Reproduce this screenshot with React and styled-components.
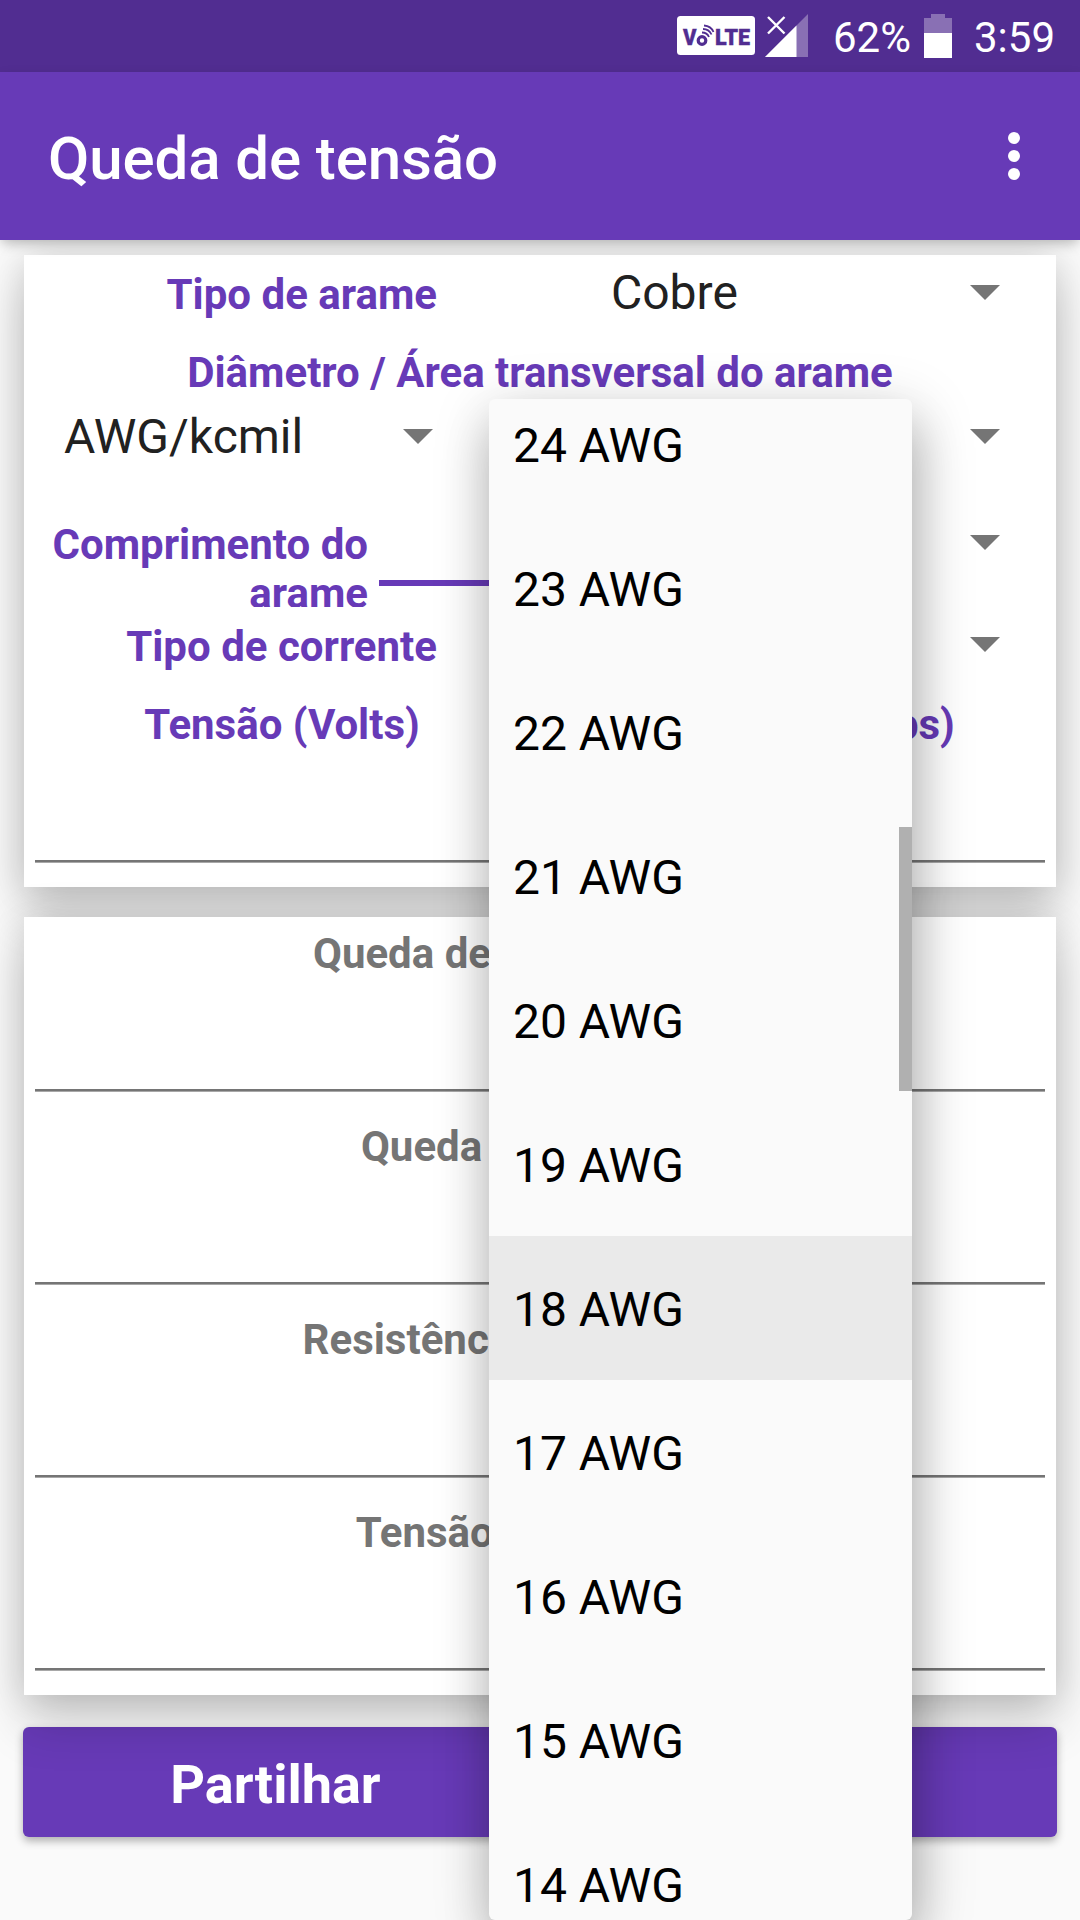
import React from "react";
import styled, { createGlobalStyle, css } from "styled-components";

const GlobalStyle = createGlobalStyle`
  * {
    box-sizing: border-box;
  }
  body {
    margin: 0;
    background: #fafafa;
    font-family: Roboto, "Liberation Sans", sans-serif;
  }
`;

const Screen = styled.div`
  position: relative;
  width: 1080px;
  height: 1920px;
  overflow: hidden;
  background: #fafafa;
`;

const StatusBar = styled.div`
  display: flex;
  align-items: flex-start;
  justify-content: flex-end;
  height: 72px;
  padding: 14px 25px 0 0;
  background: #512d91;
  color: #fff;
  font-size: 42px;
  line-height: 48px;
  svg {
    display: block;
    flex: none;
  }
`;
const Percent = styled.span`
  width: 79px;
  margin: 0 12px 0 25px;
  white-space: nowrap;
`;
const Clock = styled.span`
  margin-left: 22px;
  white-space: nowrap;
`;

const AppBar = styled.header`
  position: relative;
  z-index: 3;
  display: flex;
  align-items: center;
  justify-content: space-between;
  height: 168px;
  padding: 0 60px 0 48px;
  background: #673ab7;
  box-shadow: 0 5px 12px -2px rgba(0, 0, 0, 0.28);
`;
const Title = styled.h1`
  margin: 5px 0 0;
  color: #fff;
  font-size: 60px;
  line-height: 70px;
  font-weight: 500;
  letter-spacing: -0.1px;
`;
const MenuDots = styled.div`
  display: flex;
  flex-direction: column;
  gap: 6px;
  margin-bottom: 24px;
  margin-top: 24px;
  span {
    width: 12px;
    height: 12px;
    border-radius: 50%;
    background: #fff;
  }
`;

const Content = styled.main`
  display: flex;
  flex-direction: column;
  padding: 15px 24px 0;
`;

const Card = styled.section`
  position: relative;
  z-index: ${(props) => props.level};
  background: #fff;
  box-shadow: 0 28px 46px rgba(0, 0, 0, 0.18), 0 0 36px rgba(0, 0, 0, 0.14);
  ${(props) =>
    ({
      form: css`
        height: 632px;
        margin-bottom: 30px;
      `,
      results: css`
        height: 778px;
        padding-top: 12px;
        margin-bottom: 32px;
      `,
    }[props.kind])}
`;

const Row = styled.div`
  display: grid;
  grid-template-columns: ${(props) => props.columns};
  height: ${(props) => props.height || 75}px;
`;

const Label = styled.div`
  font-size: 42px;
  line-height: 49px;
  font-weight: 700;
  white-space: nowrap;
  color: ${(props) => (props.muted ? "#757575" : "#673ab7")};
  text-align: ${(props) => props.align || "center"};
`;
const RowLabel = styled(Label)`
  padding-top: 15px;
`;
const HeadLabel = styled(Label)`
  padding-top: 18px;
`;
// two lines, the second one cut at the row's edge
const LengthLabel = styled(Label)`
  height: 87px;
  margin-top: 46px;
  overflow: hidden;
  white-space: normal;
`;

const SpinnerBox = styled.div`
  display: flex;
  align-items: center;
  justify-content: space-between;
  height: 75px;
  padding: 0 ${(props) => props.right || 56}px 0 ${(props) => props.left || 23}px;
  margin-top: ${(props) => props.top || 0}px;
  color: #212121;
  font-size: 48px;
  line-height: 56px;
  svg {
    display: block;
    margin-left: auto;
  }
`;

const LengthInput = styled.div`
  height: 6px;
  margin: 106px 0 0 11px;
  background: #673ab7;
`;

const Underline = styled.div`
  height: 3px;
  margin: ${(props) => props.top}px 11px 0;
  background: linear-gradient(#757575 75%, #a8a8a8 75%);
`;

const Result = styled.div`
  height: 193px;
`;

const Buttons = styled.div`
  display: flex;
  gap: 20px;
  margin: 0 -1px;
`;
const Button = styled.button`
  flex: 1;
  height: 110px;
  padding: 6px 2px 0 0;
  border: 0;
  border-radius: 6px;
  background: #673ab7;
  box-shadow: 0 4px 8px rgba(0, 0, 0, 0.3);
  color: #fff;
  font: 700 54px/64px Roboto, "Liberation Sans", sans-serif;
`;

const Popup = styled.ul`
  position: absolute;
  z-index: 5;
  left: 489px;
  top: 399px;
  width: 423px;
  height: 1521px;
  margin: 0;
  padding: 0;
  border-radius: 6px;
  background: #fafafa;
  box-shadow: 2px 30px 48px rgba(0, 0, 0, 0.18), 4px 14px 60px rgba(0, 0, 0, 0.22);
  list-style: none;
`;
const PopupScroll = styled.div`
  height: 100%;
  overflow: hidden;
  border-radius: 6px;
`;
const Option = styled.li`
  height: 144px;
  padding: 2px 0 0 24px;
  background: ${(props) => (props.selected ? "#eaeaea" : "transparent")};
  color: #000;
  font-size: 48px;
  line-height: 144px;
  &:first-child {
    margin-top: -27px;
  }
`;
const ScrollThumb = styled.div`
  position: absolute;
  top: 428px;
  right: 0;
  width: 13px;
  height: 264px;
  background: #b0b0b0;
`;

const Spinner = ({ value, left, right, top }) => (
  <SpinnerBox left={left} right={right} top={top}>
    {value && <span>{value}</span>}
    <svg width="30" height="15" viewBox="0 0 30 15">
      <path d="M0 0H30L15 15Z" fill="#757575" />
    </svg>
  </SpinnerBox>
);

const VolteIcon = () => (
  <svg width="78" height="42" viewBox="0 0 78 42">
    <rect y="2" width="78" height="39" rx="3.5" fill="#fff" />
    <g
      fill="#512d91"
      stroke="#512d91"
      strokeWidth="0.4"
      fontFamily="Roboto, sans-serif"
      fontWeight="900"
      fontSize="22.5"
    >
      <text x="6" y="31" textLength="13.5" lengthAdjust="spacingAndGlyphs">
        V
      </text>
      <text x="38" y="31" textLength="35" lengthAdjust="spacingAndGlyphs">
        LTE
      </text>
    </g>
    <g fill="none" stroke="#512d91">
      <circle cx="25" cy="26.5" r="3.8" strokeWidth="3.2" />
      <path d="M25 18.5Q30 18.5 32 23" strokeWidth="1.8" />
      <path d="M26 15Q32 15 34.5 20.5" strokeWidth="1.8" />
      <path d="M27 11.5Q34 12 36.5 18" strokeWidth="1.8" />
    </g>
  </svg>
);

const SignalBox = styled.div`
  margin-left: 10px;
`;

const SignalIcon = () => (
  <SignalBox>
    <svg width="43" height="43" viewBox="0 0 43 43">
      <path d="M43 0V43H0Z" fill="#fff" opacity="0.32" />
      <path d="M31.5 11.5V43H0Z" fill="#fff" />
      <path d="M3 3L19.5 19.5M19.5 3L3 19.5" stroke="#512d91" strokeWidth="5" />
      <path d="M3 3L19.5 19.5M19.5 3L3 19.5" stroke="#fff" strokeWidth="2.4" />
    </svg>
  </SignalBox>
);

const BatteryIcon = () => (
  <svg width="28" height="44" viewBox="0 0 28 44">
    <path d="M7 0H21V4H28V19H0V4H7Z" fill="#fff" opacity="0.32" />
    <path d="M0 19H28V44H0Z" fill="#fff" />
  </svg>
);

const results = [
  "Queda de tensão (Volts)",
  "Queda de tensão %",
  "Resistência do arame (Ω)",
  "Tensão final (Volts)",
];

const sizes = [24, 23, 22, 21, 20, 19, 18, 17, 16, 15, 14];

const App = () => {
  return (
    <Screen>
      <GlobalStyle />
      <StatusBar>
        <VolteIcon />
        <SignalIcon />
        <Percent>62%</Percent>
        <BatteryIcon />
        <Clock>3:59</Clock>
      </StatusBar>
      <AppBar>
        <Title>Queda de tensão</Title>
        <MenuDots>
          <span />
          <span />
          <span />
        </MenuDots>
      </AppBar>
      <Content>
        <Card kind="form" level={1}>
          <Row columns="413px 151px 1fr">
            <RowLabel align="right">Tipo de arame</RowLabel>
            <span />
            <Spinner value="Cobre" />
          </Row>
          <Row columns="1fr" height={69}>
            <HeadLabel>Diâmetro / Área transversal do arame</HeadLabel>
          </Row>
          <Row columns="449px 1fr">
            <Spinner value="AWG/kcmil" left={40} right={40} />
            <Spinner />
          </Row>
          <Row columns="344px 300px 1fr" height={133}>
            <LengthLabel align="right">Comprimento do arame</LengthLabel>
            <LengthInput />
            <Spinner top={31} />
          </Row>
          <Row columns="413px 1fr">
            <RowLabel align="right">Tipo de corrente</RowLabel>
            <Spinner />
          </Row>
          <Row columns="1fr 1fr" height={69}>
            <HeadLabel>Tensão (Volts)</HeadLabel>
            <HeadLabel>Corrente (Amps)</HeadLabel>
          </Row>
          <Underline top={109} />
        </Card>
        <Card kind="results" level={2}>
          {results.map((label) => (
            <Result key={label}>
              <Label muted>{label}</Label>
              <Underline top={111} />
            </Result>
          ))}
        </Card>
        <Buttons>
          <Button>Partilhar</Button>
          <Button>Limpar</Button>
        </Buttons>
      </Content>
      <Popup>
        <PopupScroll>
          {sizes.map((size) => (
            <Option key={size} selected={size === 18}>
              {size} AWG
            </Option>
          ))}
        </PopupScroll>
        <ScrollThumb />
      </Popup>
    </Screen>
  );
};

export default App;
